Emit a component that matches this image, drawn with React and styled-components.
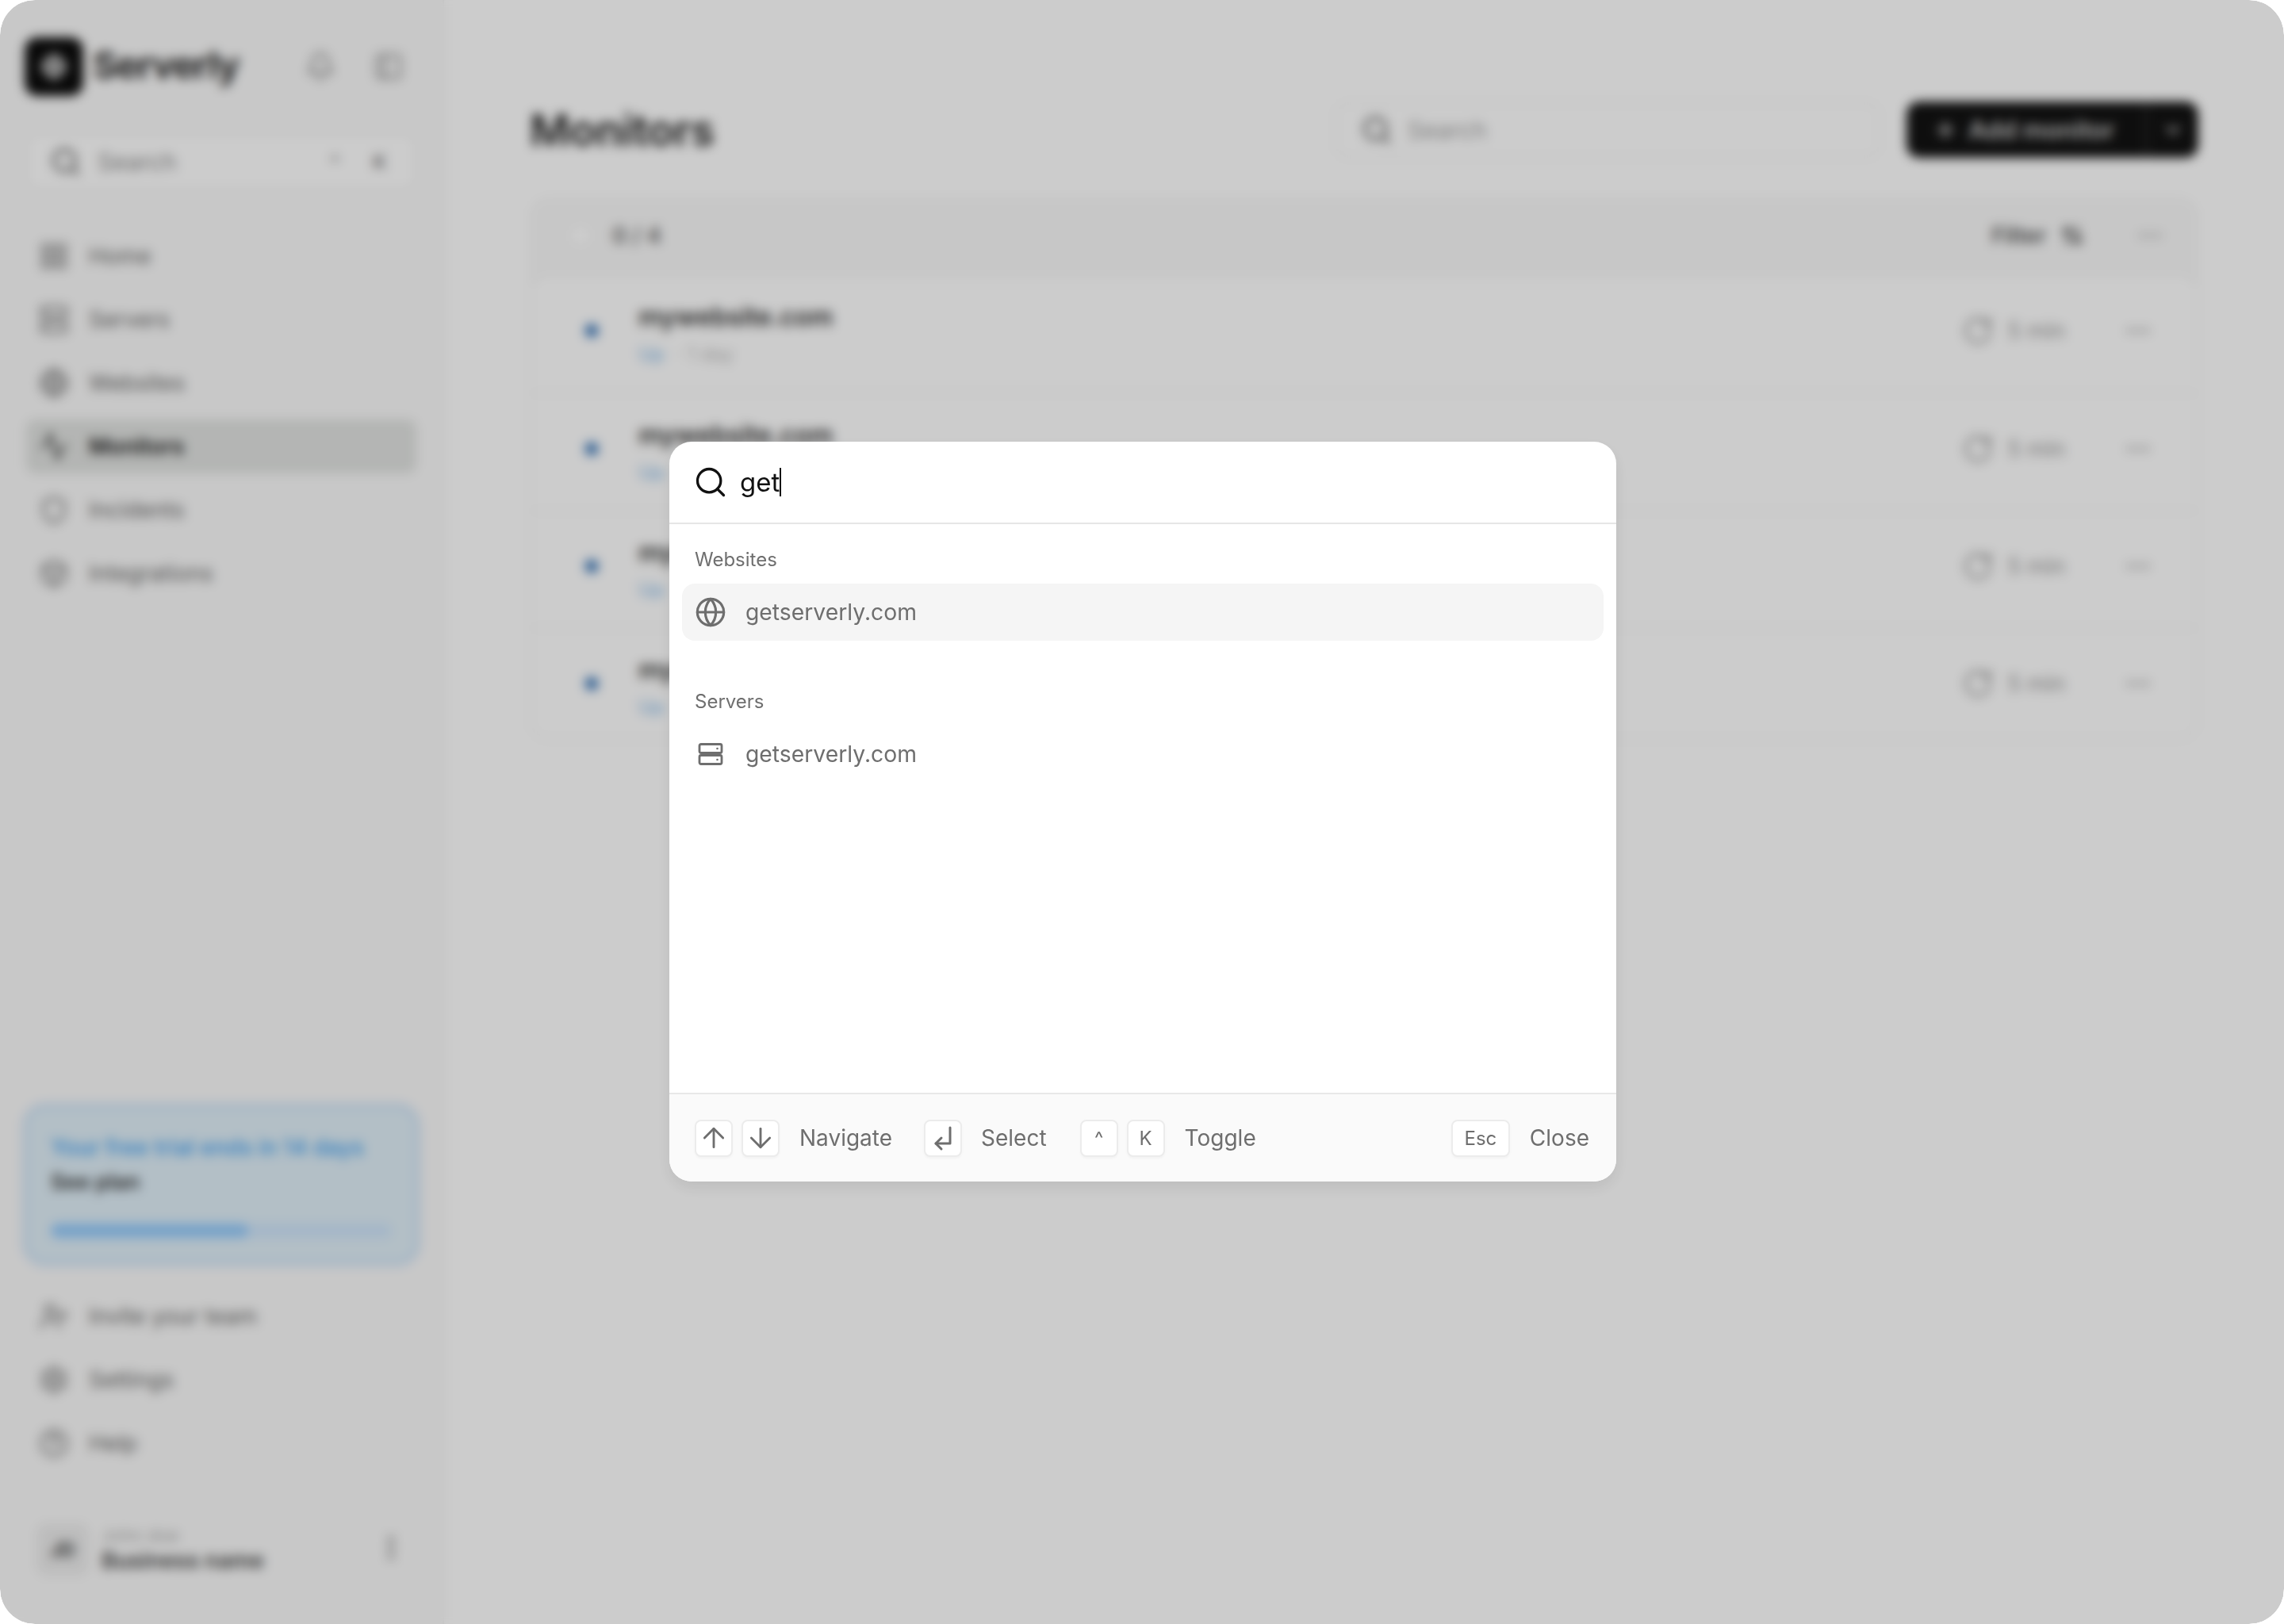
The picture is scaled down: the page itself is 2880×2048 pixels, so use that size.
import React from 'react';
import styled, { createGlobalStyle } from 'styled-components';
import {
  Activity, ArrowDown, ArrowUp, ArrowUpDown, Bell, Box, ChevronDown, CircleHelp, Ellipsis,
  EllipsisVertical, Globe, LayoutGrid, PanelLeft, Plus, RotateCw, Search, Server, Settings,
  Shield, UserPlus,
} from 'lucide-react';

const GlobalStyle = createGlobalStyle`
  html, body { margin: 0; padding: 0; background: #fff; }
  body { font-family: 'Inter', 'Liberation Sans', sans-serif; }
  * { box-sizing: border-box; }
`;

// The page behind the dialog
const Page = styled.div`
  position: relative;
  width: 2880px;
  height: 2048px;
  display: flex;
  overflow: hidden;
  background: #fff;
  border-radius: 44px;
`;

const Sidebar = styled.aside`
  width: 560px;
  flex: none;
  display: flex;
  flex-direction: column;
  padding: 46px 33px 62px 33px;
  background: #fafafa;
  border-right: 2px solid #f2f2f2;
`;

const Brand = styled.div`
  height: 76px;
  display: flex;
  align-items: center;
  margin-left: -2px;
`;

const LogoBox = styled.div`
  width: 74px;
  height: 74px;
  flex: none;
  display: flex;
  align-items: center;
  justify-content: center;
  border-radius: 16px;
  background: #0c0c0c;
`;

const BrandName = styled.span`
  margin: -6px 0 0 12px;
  font-size: 47px;
  font-weight: 700;
  letter-spacing: -1.4px;
  color: #2c2c2c;
`;

const BrandIcons = styled.div`
  margin-left: auto;
  display: flex;
  gap: 48px;
  padding-right: 16px;
  color: #8a8a8a;
`;

const SideSearch = styled.div`
  height: 70px;
  margin-top: 47px;
  display: flex;
  align-items: center;
  padding: 0 36px 0 28px;
  gap: 20px;
  background: #fff;
  border: 2px solid #f2f2f2;
  border-radius: 16px;
  font-size: 30px;
  color: #8c8c8c;
  svg { color: #777; }
`;

const SideKeys = styled.div`
  margin-left: auto;
  display: flex;
  gap: 42px;
  font-size: 24px;
  font-weight: 600;
  color: #777;
`;

const NavList = styled.nav`
  display: flex;
  flex-direction: column;
  gap: 12px;
  margin-top: ${props => props.$top || '50px'};
`;

const NavItem = styled.div`
  height: 68px;
  display: flex;
  align-items: center;
  gap: 25px;
  padding: 0 16px;
  border-radius: 12px;
  font-size: 28px;
  font-weight: ${props => (props.$active ? 600 : 400)};
  color: ${props => (props.$active ? '#1c1c1c' : '#666')};
  background: ${props => (props.$active ? '#e1e3e1' : 'transparent')};
  svg { color: ${props => (props.$active ? '#444' : '#777')}; }
`;

const TrialCard = styled.div`
  margin: auto -4px 0 -4px;
  padding: 29px 31px 31px 31px;
  background: #e0eff8;
  border: 4px solid #bdd9f6;
  border-radius: 28px;
`;

const TrialText = styled.div`
  height: 44px;
  line-height: 44px;
  white-space: nowrap;
  font-size: ${props => (props.$strong ? '27px' : '28px')};
  font-weight: ${props => (props.$strong ? 600 : 500)};
  color: ${props => (props.$strong ? '#333' : '#3f9fee')};
`;

const TrialTrack = styled.div`
  height: 18px;
  margin-top: 30px;
  border-radius: 9px;
  background: #cee5fa;
`;

const TrialFill = styled.div`
  height: 100%;
  border-radius: 9px;
  background: #95cbfc;
`;

const UserRow = styled.div`
  height: 64px;
  margin-top: 68px;
  display: flex;
  align-items: center;
  padding-left: 13px;
`;

const Avatar = styled.div`
  width: 66px;
  height: 66px;
  flex: none;
  display: flex;
  align-items: center;
  justify-content: center;
  border-radius: 14px;
  background: #ededed;
  font-size: 24px;
  font-weight: 700;
  color: #444;
`;

const UserText = styled.div`
  margin-left: 16px;
  display: flex;
  flex-direction: column;
  gap: 2px;
`;

const UserName = styled.span`
  font-size: 22px;
  color: #aaa;
`;

const BusinessName = styled.span`
  font-size: 28px;
  font-weight: 600;
  color: #444;
`;

const Kebab = styled.div`
  margin-left: auto;
  margin-right: 13px;
  color: #999;
`;

const Main = styled.main`
  flex: 1;
  padding: 128px 108px 0 108px;
`;

const TopBar = styled.div`
  height: 71px;
  display: flex;
  align-items: center;
`;

const Title = styled.h1`
  margin: 0;
  font-size: 55px;
  font-weight: 600;
  letter-spacing: -0.5px;
  color: #222;
`;

const TopSearch = styled.div`
  width: 686px;
  height: 70px;
  margin-left: auto;
  display: flex;
  align-items: center;
  gap: 19px;
  padding: 0 30px;
  background: #fff;
  border: 2px solid #f2f2f2;
  border-radius: 16px;
  font-size: 30px;
  color: #a0a0a0;
  svg { color: #777; }
`;

const AddButton = styled.div`
  width: 368px;
  height: 71px;
  margin-left: 34px;
  display: flex;
  align-items: stretch;
  border-radius: 16px;
  background: #121212;
  color: #d0d0d0;
`;

const AddLabel = styled.div`
  flex: 1;
  display: flex;
  align-items: center;
  gap: 14px;
  padding-left: 34px;
  font-size: 31px;
  font-weight: 600;
  white-space: nowrap;
  border-right: 3px solid #2e2e2e;
`;

const AddCaret = styled.div`
  width: 64px;
  display: flex;
  align-items: center;
  justify-content: center;
`;

const Table = styled.section`
  margin-top: 50px;
`;

const TableHead = styled.div`
  height: 110px;
  display: flex;
  align-items: center;
  padding: 0 43px 14px 48px;
  background: #f9f9f9;
  border-radius: 24px 24px 0 0;
  font-size: 28px;
  color: #666;
`;

const CheckBox = styled.div`
  width: 32px;
  height: 32px;
  border-radius: 8px;
  background: #fff;
  border: 2px solid #eee;
`;

const Count = styled.span`
  margin-left: 24px;
  font-weight: 600;
`;

const FilterText = styled.span`
  margin-left: auto;
  font-weight: 600;
  color: #555;
`;

const FilterIcon = styled.div`
  margin-left: 18px;
  display: flex;
  color: #555;
`;

const HeadDots = styled.div`
  margin-left: 65px;
  display: flex;
  color: #aaa;
`;

const RowsCard = styled.div`
  margin-top: -14px;
  background: #fff;
  border: 2px solid #f3f3f3;
  border-radius: 24px;
  position: relative;
`;

const MonitorRow = styled.div`
  height: 148px;
  display: flex;
  align-items: center;
  padding: 0 56px 8px 69px;
  & + & { border-top: 2px solid #f3f3f3; }
  &:last-child { height: 140px; padding-bottom: 0; }
`;

const StatusDot = styled.span`
  width: 14px;
  height: 14px;
  flex: none;
  border-radius: 50%;
  background: #1f5fa8;
  box-shadow: 0 0 0 4px #cfe2f5;
`;

const MonitorText = styled.div`
  margin: 7px 0 0 52px;
  display: flex;
  flex-direction: column;
  gap: 13px;
`;

const MonitorName = styled.span`
  font-size: 32px;
  font-weight: 600;
  color: #333;
`;

const MonitorMeta = styled.span`
  font-size: 24px;
  color: #bbb;
`;

const UpText = styled.span`
  color: #7ab3e6;
  margin-right: 16px;
`;

const Interval = styled.div`
  margin-left: auto;
  display: flex;
  align-items: center;
  gap: 17px;
  font-size: 28px;
  color: #999;
`;

const RowDots = styled.div`
  margin-left: 74px;
  display: flex;
  color: #999;
`;

// Dialog layer
const Overlay = styled.div`
  position: absolute;
  inset: 0;
  display: flex;
  justify-content: center;
  align-items: flex-start;
  padding: 557px 0 0 2px;
  background: rgba(0, 0, 0, 0.2);
  backdrop-filter: blur(7px);
  border-radius: 44px;
`;

const Dialog = styled.div`
  width: 1194px;
  height: 933px;
  display: flex;
  flex-direction: column;
  overflow: hidden;
  background: #fff;
  border-radius: 28px;
  box-shadow: 0 8px 20px rgba(0, 0, 0, 0.08);
`;

const DialogHead = styled.div`
  height: 104px;
  flex: none;
  display: flex;
  align-items: center;
  gap: 15px;
  padding-left: 30px;
  border-bottom: 2px solid #e6e6e6;
  color: #111;
`;

const QueryText = styled.span`
  font-size: 33px;
  line-height: 38px;
  color: #111;
`;

const Caret = styled.span`
  width: 2px;
  height: 36px;
  margin-left: -15px;
  background: #111;
`;

const DialogBody = styled.div`
  flex: 1;
  padding: 28px 16px 0 16px;
`;

const GroupLabel = styled.div`
  height: 34px;
  line-height: 34px;
  margin: ${props => (props.$first ? '0' : '60px')} 0 13px 16px;
  font-size: 24px;
  color: #6f6f6f;
`;

const ResultRow = styled.div`
  height: 72px;
  display: flex;
  align-items: center;
  gap: 24px;
  padding-left: 16px;
  border-radius: 16px;
  background: ${props => (props.$selected ? '#f5f5f5' : 'transparent')};
  color: #6e6e6e;
  font-size: 28.3px;
`;

const DialogFoot = styled.div`
  height: 112px;
  flex: none;
  display: flex;
  align-items: center;
  padding: 0 34px 0 32px;
  background: #fafafa;
  border-top: 2px solid #e8e8e8;
`;

const KeyCap = styled.span`
  width: ${props => props.$width || '48px'};
  height: 47px;
  flex: none;
  display: flex;
  align-items: center;
  justify-content: center;
  margin-right: ${props => props.$gap || '11px'};
  background: #fff;
  border: 2px solid #ececec;
  border-radius: 8px;
  box-shadow: 0 2px 3px rgba(0, 0, 0, 0.03);
  font-size: 24px;
  color: #6e6e6e;
`;

const HintText = styled.span`
  margin-left: ${props => props.$left || '14px'};
  margin-right: ${props => props.$right || '40px'};
  font-size: 28px;
  color: #6e6e6e;
`;

const FootRight = styled.div`
  margin-left: auto;
  display: flex;
  align-items: center;
`;

const LogoMark = () => (
  <svg width="46" height="46" viewBox="0 0 46 46" fill="none">
    <path d="M23 4 L42 23 L23 42 L4 23 Z" fill="#d6d6d6" />
    <path d="M23 4 V42 M4 23 H42" stroke="#0c0c0c" strokeWidth="2" />
  </svg>
);

const ServerGlyph = () => (
  <svg width="40" height="40" viewBox="0 0 40 40" fill="none" stroke="currentColor" strokeWidth="2.8">
    <rect x="6" y="7.5" width="28" height="11" rx="2" />
    <rect x="6" y="21.5" width="28" height="11" rx="2" />
    <circle cx="28.5" cy="13" r="1.3" fill="currentColor" stroke="none" />
    <circle cx="28.5" cy="27" r="1.3" fill="currentColor" stroke="none" />
  </svg>
);

const EnterGlyph = () => (
  <svg width="40" height="40" viewBox="0 0 40 40" fill="none" stroke="currentColor" strokeWidth="3" strokeLinecap="round" strokeLinejoin="round">
    <path d="M29 7 V27 H11" />
    <path d="M18 20 L11 27 L18 34" />
  </svg>
);

const topNav = [
  { label: 'Home', icon: LayoutGrid },
  { label: 'Servers', icon: Server },
  { label: 'Websites', icon: Globe },
  { label: 'Monitors', icon: Activity, active: true },
  { label: 'Incidents', icon: Shield },
  { label: 'Integrations', icon: Box },
];

const bottomNav = [
  { label: 'Invite your team', icon: UserPlus },
  { label: 'Settings', icon: Settings },
  { label: 'Help', icon: CircleHelp },
];

const monitors = ['mywebsite.com', 'mywebsite.com', 'mywebsite.com', 'mywebsite.com'];

const App = () => (
  <>
    <GlobalStyle />
    <Page>
      <Sidebar>
        <Brand>
          <LogoBox><LogoMark /></LogoBox>
          <BrandName>Serverly</BrandName>
          <BrandIcons>
            <Bell size={38} />
            <PanelLeft size={38} />
          </BrandIcons>
        </Brand>
        <SideSearch>
          <Search size={40} strokeWidth={2.6} />
          Search
          <SideKeys><span>^</span><span>K</span></SideKeys>
        </SideSearch>
        <NavList>
          {topNav.map(({ label, icon: Icon, active }) => (
            <NavItem key={label} $active={active}><Icon size={38} />{label}</NavItem>
          ))}
        </NavList>
        <TrialCard>
          <TrialText>Your free trial ends in 14 days</TrialText>
          <TrialText $strong>See plan</TrialText>
          <TrialTrack><TrialFill style={{ width: '58%' }} /></TrialTrack>
        </TrialCard>
        <NavList $top="30px">
          {bottomNav.map(({ label, icon: Icon }) => (
            <NavItem key={label}><Icon size={38} />{label}</NavItem>
          ))}
        </NavList>
        <UserRow>
          <Avatar>JD</Avatar>
          <UserText>
            <UserName>John doe</UserName>
            <BusinessName>Business name</BusinessName>
          </UserText>
          <Kebab><EllipsisVertical size={38} strokeWidth={3} /></Kebab>
        </UserRow>
      </Sidebar>

      <Main>
        <TopBar>
          <Title>Monitors</Title>
          <TopSearch><Search size={40} strokeWidth={2.6} />Search</TopSearch>
          <AddButton>
            <AddLabel><Plus size={30} strokeWidth={3} />Add monitor</AddLabel>
            <AddCaret><ChevronDown size={28} strokeWidth={3} /></AddCaret>
          </AddButton>
        </TopBar>
        <Table>
          <TableHead>
            <CheckBox />
            <Count>0 / 4</Count>
            <FilterText>Filter</FilterText>
            <FilterIcon><ArrowUpDown size={30} strokeWidth={3} /></FilterIcon>
            <HeadDots><Ellipsis size={36} /></HeadDots>
          </TableHead>
          <RowsCard>
            {monitors.map((name, i) => (
              <MonitorRow key={i}>
                <StatusDot />
                <MonitorText>
                  <MonitorName>{name}</MonitorName>
                  <MonitorMeta><UpText>Up</UpText>· 1 day</MonitorMeta>
                </MonitorText>
                <Interval><RotateCw size={40} />5 min</Interval>
                <RowDots><Ellipsis size={36} /></RowDots>
              </MonitorRow>
            ))}
          </RowsCard>
        </Table>
      </Main>

      <Overlay>
        <Dialog>
          <DialogHead>
            <Search size={44} strokeWidth={1.8} />
            <QueryText>get</QueryText>
            <Caret />
          </DialogHead>
          <DialogBody>
            <GroupLabel $first>Websites</GroupLabel>
            <ResultRow $selected><Globe size={40} strokeWidth={1.9} />getserverly.com</ResultRow>
            <GroupLabel>Servers</GroupLabel>
            <ResultRow><ServerGlyph />getserverly.com</ResultRow>
          </DialogBody>
          <DialogFoot>
            <KeyCap><ArrowUp size={40} strokeWidth={1.7} /></KeyCap>
            <KeyCap $gap="0"><ArrowDown size={40} strokeWidth={1.7} /></KeyCap>
            <HintText $left="25px">Navigate</HintText>
            <KeyCap $gap="0"><EnterGlyph /></KeyCap>
            <HintText $left="24px" $right="42px">Select</HintText>
            <KeyCap>^</KeyCap>
            <KeyCap $gap="0">K</KeyCap>
            <HintText $left="25px">Toggle</HintText>
            <FootRight>
              <KeyCap $width="74px" $gap="25px">Esc</KeyCap>
              <HintText $left="0" $right="0">Close</HintText>
            </FootRight>
          </DialogFoot>
        </Dialog>
      </Overlay>
    </Page>
  </>
);

export default App;
